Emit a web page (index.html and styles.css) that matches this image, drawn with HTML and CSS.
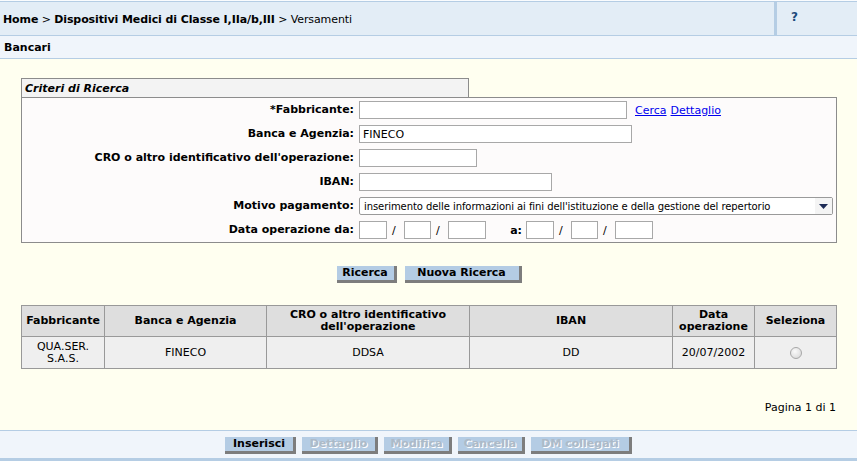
FILE: index.html
```html
<!DOCTYPE html>
<html lang="it">
<head>
<meta charset="utf-8">
<title>Versamenti - Bancari</title>
<link rel="stylesheet" href="styles.css">
</head>
<body>
<div class="page">
  <div class="topbar">
    <div class="crumbs"><b>Home</b> &gt; <b>Dispositivi Medici di Classe I,IIa/b,III</b> &gt; Versamenti</div>
    <div class="help">?</div>
  </div>
  <div class="subtitle">Bancari</div>

  <main class="main">
    <div class="criteria">
      <div class="tab">Criteri di Ricerca</div>
      <div class="box">
        <label class="lbl">*Fabbricante:</label>
        <div class="fld"><input class="inp w-fab" type="text"> <a href="#" class="lnk">Cerca</a> <a href="#" class="lnk">Dettaglio</a></div>

        <label class="lbl">Banca e Agenzia:</label>
        <div class="fld"><input class="inp w-banca" type="text" value="FINECO"></div>

        <label class="lbl">CRO o altro identificativo dell'operazione:</label>
        <div class="fld"><input class="inp w-cro" type="text"></div>

        <label class="lbl">IBAN:</label>
        <div class="fld"><input class="inp w-iban" type="text"></div>

        <label class="lbl">Motivo pagamento:</label>
        <div class="fld">
          <div class="select">
            <span class="select-text">inserimento delle informazioni ai fini dell'istituzione e della gestione del repertorio</span>
            <span class="select-arrow"><svg width="9" height="5" viewBox="0 0 9 5"><path d="M0 0h9L4.5 5z" fill="#1c2a55"/></svg></span>
          </div>
        </div>

        <label class="lbl">Data operazione da:</label>
        <div class="fld dates">
          <input class="inp w-dd" type="text"><span class="sep">/</span><input class="inp w-mm" type="text"><span class="sep">/</span><input class="inp w-yy" type="text">
          <span class="a-lbl">a:</span>
          <input class="inp w-dd" type="text"><span class="sep">/</span><input class="inp w-mm" type="text"><span class="sep">/</span><input class="inp w-yy" type="text">
        </div>
      </div>
    </div>

    <div class="btnrow search-btns">
      <button class="btn b-ricerca">Ricerca</button>
      <button class="btn b-nuova">Nuova Ricerca</button>
    </div>

    <table class="results">
      <colgroup>
        <col class="c1"><col class="c2"><col class="c3"><col class="c4"><col class="c5"><col class="c6">
      </colgroup>
      <thead>
        <tr>
          <th>Fabbricante</th>
          <th>Banca e Agenzia</th>
          <th>CRO o altro identificativo<br>dell'operazione</th>
          <th>IBAN</th>
          <th>Data<br>operazione</th>
          <th>Seleziona</th>
        </tr>
      </thead>
      <tbody>
        <tr>
          <td>QUA.SER.<br>S.A.S.</td>
          <td>FINECO</td>
          <td>DDSA</td>
          <td>DD</td>
          <td>20/07/2002</td>
          <td><span class="radio"></span></td>
        </tr>
      </tbody>
    </table>

    <div class="pager">Pagina 1 di 1</div>
  </main>

  <div class="footer">
    <button class="btn b-ins">Inserisci</button>
    <button class="btn dis b-det" disabled>Dettaglio</button>
    <button class="btn dis b-mod" disabled>Modifica</button>
    <button class="btn dis b-can" disabled>Cancella</button>
    <button class="btn dis b-dm" disabled>DM collegati</button>
  </div>
</div>
</body>
</html>
```

FILE: styles.css
```css
* { box-sizing: border-box; }
html, body { margin: 0; padding: 0; }
body {
  font-family: "DejaVu Sans", Verdana, sans-serif;
  font-size: 11px;
  color: #000;
  background: #fffff0;
}
.page {
  height: 461px;
  display: flex;
  flex-direction: column;
  padding-top: 1px;
  background: #fafcfe;
}
.topbar {
  display: flex;
  height: 35px;
  background: #e3edf6;
  border-top: 1px solid #b5cde4;
  border-bottom: 1px solid #b5cde4;
}
.crumbs {
  flex: 1;
  display: flex;
  align-items: center;
  padding-left: 3px;
  padding-top: 1px;
  white-space: pre;
  letter-spacing: -0.1px;
}
.help {
  width: 83px;
  border-left: 3px solid #b5cde4;
  font-weight: bold;
  font-size: 12px;
  color: #1d4b7b;
  padding-left: 14px;
  padding-top: 8px;
}
.subtitle {
  height: 23px;
  background: #f0f5fb;
  border-bottom: 1px solid #b5cde4;
  font-weight: bold;
  padding-left: 4px;
  padding-top: 5px;
}
.main {
  flex: 1;
  background: #fffff0;
  padding: 19px 20px 0 21px;
}
.criteria { width: 816px; }
.tab {
  width: 448px;
  height: 19px;
  border: 1px solid #8c8c8c;
  border-bottom: none;
  background: #f3f3f3;
  font-weight: bold;
  font-style: italic;
  padding: 3px 0 0 3px;
}
.box {
  border: 1px solid #8c8c8c;
  background: #fdfbfb;
  display: grid;
  grid-template-columns: 332px 1fr;
  grid-auto-rows: 18px;
  row-gap: 6px;
  column-gap: 5px;
  padding: 3px 0 3px 0;
}
.lbl {
  font-weight: bold;
  text-align: right;
  line-height: 18px;
  white-space: nowrap;
}
.fld {
  display: flex;
  align-items: center;
  gap: 4px;
}
.inp {
  height: 18px;
  border: 1px solid #a8a8a8;
  background: #fff;
  font-family: inherit;
  font-size: 11px;
  padding: 0 3px;
  margin: 0;
}
.w-fab { width: 268px; }
.w-banca { width: 273px; }
.w-cro { width: 118px; }
.w-iban { width: 193px; }
.w-dd { width: 28px; }
.w-mm { width: 27px; }
.w-yy { width: 38px; }
.lnk { color: #0000ee; text-decoration: underline; }
.fld .lnk:first-of-type { margin-left: 4px; }
.dates { gap: 0; }
.sep { width: 17px; text-align: left; padding-left: 5px; }
.a-lbl { font-weight: bold; width: 40px; text-align: right; padding-right: 4px; }
.select {
  width: 474px;
  height: 18px;
  border: 1px solid #9a9a9a;
  border-radius: 2px;
  background: #fff;
  display: flex;
  align-items: center;
  justify-content: space-between;
  padding-left: 4px;
}
.select-text {
  font-size: 10px;
  letter-spacing: -0.07px;
  white-space: nowrap;
}
.select-arrow {
  width: 17px;
  height: 16px;
  display: flex;
  align-items: center;
  justify-content: center;
  background: #f4f4f4;
}
.btnrow {
  display: flex;
  justify-content: center;
  gap: 8px;
}
.search-btns { margin-top: 23px; }
.btn {
  font-family: inherit;
  font-size: 11px;
  font-weight: bold;
  color: #000;
  background: #b4cce4;
  border: none;
  border-right: 3px solid #7d7d7d;
  border-bottom: 3px solid #7d7d7d;
  height: 17px;
  padding: 0;
  margin: 0;
  line-height: 14px;
}
.b-ricerca { width: 60px; }
.b-nuova { width: 117px; }
.btn.dis {
  color: #adbac8;
  text-shadow: 1px 1px 0 #ffffff;
}
.results {
  margin-top: 22px;
  width: 816px;
  border-collapse: collapse;
  table-layout: fixed;
  border: 1px solid #888;
}
.c1 { width: 83px; }
.c2 { width: 162px; }
.c3 { width: 203px; }
.c4 { width: 203px; }
.c5 { width: 82px; }
.c6 { width: 82px; }
.results th, .results td {
  border: 1px solid #999;
  text-align: center;
  padding: 0;
  line-height: 12px;
}
.results th {
  height: 31px;
  background: #dedede;
  font-weight: bold;
}
.results td {
  height: 32px;
  background: #efefef;
  font-weight: normal;
}
.radio {
  display: inline-block;
  width: 12px;
  height: 12px;
  border-radius: 50%;
  border: 1px solid #a8a8a8;
  background: radial-gradient(circle at 40% 35%, #fafafa, #d4d4d4);
  vertical-align: middle;
  margin-top: 1px;
}
.pager {
  text-align: right;
  margin-top: 32px;
  padding-right: 1px;
}
.footer {
  height: 31px;
  background: #f0f5fb;
  border-top: 1px solid #b5cde4;
  border-bottom: 3px solid #b5cde4;
  display: flex;
  justify-content: center;
  gap: 6px;
  padding-top: 6px;
}
.b-ins { width: 71px; }
.b-det { width: 76px; }
.b-mod { width: 68px; }
.b-can { width: 67px; }
.b-dm { width: 101px; }
```
